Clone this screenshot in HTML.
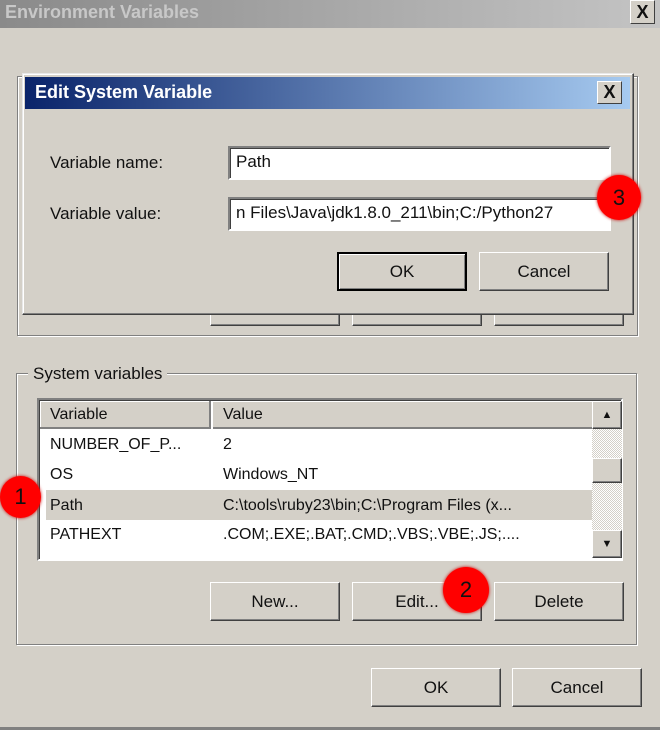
<!DOCTYPE html>
<html><head><meta charset="utf-8"><style>
*{box-sizing:border-box;margin:0;padding:0}
body{width:660px;height:730px;background:#d4d0c8;position:relative;overflow:hidden;font-family:"Liberation Sans",sans-serif;font-size:16px;color:#111}
.a{position:absolute}
.btn{position:absolute;background:#d4d0c8;border:1px solid;border-color:#fff #404040 #404040 #fff;box-shadow:inset -1px -1px 0 #808080;display:flex;align-items:center;justify-content:center;font-size:17px}
.inp{position:absolute;background:#fff;border:2px solid;border-color:#808080 #fff #fff #808080;box-shadow:inset 1px 1px 0 #404040;font-size:17px;padding:4px 6px;white-space:nowrap;overflow:hidden}
.grp{position:absolute;border:1px solid #808080;box-shadow:1px 1px 0 #fff, inset 1px 1px 0 #fff}
.circ{position:absolute;border-radius:50%;background:#f00;color:#111;font-size:22px;display:flex;align-items:center;justify-content:center;box-shadow:0 0 3px #c00}
.row{position:absolute;font-size:16px;white-space:nowrap}
.x{position:absolute;background:#d4d0c8;border:1px solid;border-color:#fff #404040 #404040 #fff;font-weight:bold;display:flex;align-items:center;justify-content:center;font-size:18px}
</style></head><body>
<div class="a" style="left:0;top:0;width:660px;height:28px;background:linear-gradient(90deg,#8a8a8a,#c4c4c4)"></div>
<div class="a" style="left:5px;top:2px;font-weight:bold;font-size:18px;color:#c8c8c8">Environment Variables</div>
<div class="x" style="left:630px;top:0;width:25px;height:24px">X</div>

<div class="grp" style="left:17px;top:76px;width:621px;height:260px"></div>
<div class="btn" style="left:210px;top:300px;width:130px;height:26px"></div>
<div class="btn" style="left:352px;top:300px;width:130px;height:26px"></div>
<div class="btn" style="left:494px;top:300px;width:130px;height:26px"></div>

<div class="a" style="left:22px;top:73px;width:612px;height:242px;background:#d4d0c8;border:1px solid;border-color:#e8e8e8 #404040 #404040 #e8e8e8;box-shadow:inset -1px -1px 0 #808080,inset 1px 1px 0 #fff"></div>
<div class="a" style="left:25px;top:77px;width:605px;height:32px;background:linear-gradient(90deg,#0a246a,#a6caf0)"></div>
<div class="a" style="left:35px;top:82px;font-weight:bold;font-size:18px;color:#fff">Edit System Variable</div>
<div class="x" style="left:597px;top:81px;width:25px;height:23px">X</div>
<div class="a" style="left:50px;top:153px;font-size:17px">Variable name:</div>
<div class="a" style="left:50px;top:204px;font-size:17px">Variable value:</div>
<div class="inp" style="left:228px;top:146px;width:383px;height:34px">Path</div>
<div class="inp" style="left:228px;top:197px;width:383px;height:34px">n Files\Java\jdk1.8.0_211\bin;C:/Python27</div>
<div class="btn" style="left:337px;top:252px;width:130px;height:39px;border:2px solid #000;box-shadow:inset 1px 1px 0 #fff,inset -1px -1px 0 #808080">OK</div>
<div class="btn" style="left:479px;top:252px;width:130px;height:39px">Cancel</div>

<div class="grp" style="left:16px;top:373px;width:621px;height:272px"></div>
<div class="a" style="left:28px;top:364px;background:#d4d0c8;padding:0 5px;font-size:17px">System variables</div>
<div class="a" style="left:37px;top:398px;width:586px;height:163px;background:#fff;border:2px solid;border-color:#808080 #fff #fff #808080;box-shadow:inset 1px 1px 0 #404040"></div>
<div class="a" style="left:40px;top:401px;width:552px;height:28px;background:#d4d0c8;border-bottom:2px solid #808080;box-shadow:inset 1px 1px 0 #fff"></div>
<div class="a" style="left:209px;top:401px;width:2px;height:28px;background:#808080"></div>
<div class="a" style="left:211px;top:401px;width:2px;height:28px;background:#fff"></div>
<div class="row" style="left:50px;top:406px">Variable</div>
<div class="row" style="left:223px;top:406px">Value</div>
<div class="a" style="left:46px;top:490px;width:546px;height:30px;background:#d4d0c8"></div>
<div class="row" style="left:50px;top:436px">NUMBER_OF_P...</div><div class="row" style="left:223px;top:436px">2</div>
<div class="row" style="left:50px;top:466px">OS</div><div class="row" style="left:223px;top:466px">Windows_NT</div>
<div class="row" style="left:50px;top:497px">Path</div><div class="row" style="left:223px;top:497px">C:\tools\ruby23\bin;C:\Program Files (x...</div>
<div class="row" style="left:50px;top:526px">PATHEXT</div><div class="row" style="left:223px;top:526px">.COM;.EXE;.BAT;.CMD;.VBS;.VBE;.JS;....</div>
<div class="a" style="left:592px;top:401px;width:30px;height:157px;background:repeating-conic-gradient(#d4d0c8 0 25%,#fff 0 50%) 0 0/2px 2px"></div>
<div class="btn" style="left:592px;top:401px;width:30px;height:28px;font-size:11px">▲</div>
<div class="btn" style="left:592px;top:458px;width:30px;height:25px"></div>
<div class="btn" style="left:592px;top:530px;width:30px;height:28px;font-size:11px">▼</div>

<div class="btn" style="left:210px;top:582px;width:130px;height:39px">New...</div>
<div class="btn" style="left:352px;top:582px;width:130px;height:39px">Edit...</div>
<div class="btn" style="left:494px;top:582px;width:130px;height:39px">Delete</div>
<div class="btn" style="left:371px;top:668px;width:130px;height:39px">OK</div>
<div class="btn" style="left:512px;top:668px;width:130px;height:39px">Cancel</div>
<div class="a" style="left:0;top:727px;width:660px;height:3px;background:#808080"></div>

<div class="circ" style="left:0px;top:476px;width:41px;height:42px">1</div>
<div class="circ" style="left:443px;top:567px;width:46px;height:46px">2</div>
<div class="circ" style="left:597px;top:175px;width:44px;height:45px">3</div>
</body></html>
